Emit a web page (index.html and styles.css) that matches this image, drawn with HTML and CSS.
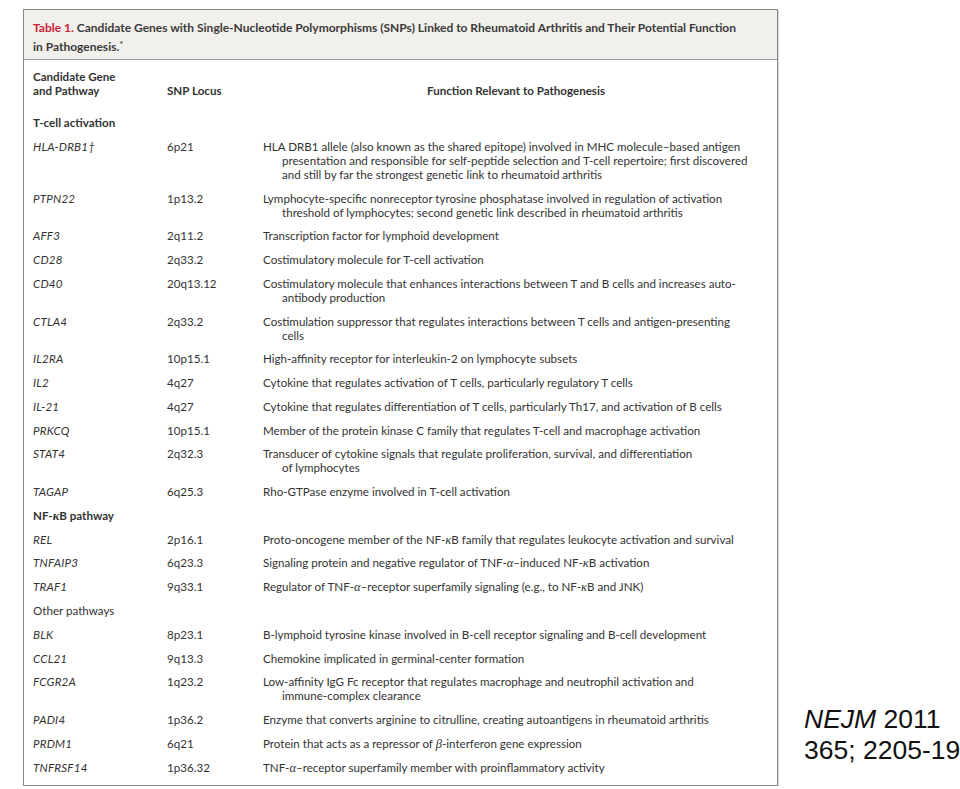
FILE: index.html
```html
<!DOCTYPE html>
<html>
<head>
<meta charset="utf-8">
<link rel="stylesheet" href="styles.css">
</head>
<body>
<div class="page">
  <div class="table-box">
    <div class="title">
      <span class="tnum">Table 1.</span> Candidate Genes with Single-Nucleotide Polymorphisms (SNPs) Linked to Rheumatoid Arthritis and Their Potential Function<br>in Pathogenesis.<sup class="star">*</sup>
    </div>
    <div class="body">
      <div class="row head">
        <div class="c1">Candidate Gene<br>and Pathway</div>
        <div class="c2">SNP Locus</div>
        <div class="c3">Function Relevant to Pathogenesis</div>
      </div>
      <div class="rows">
        <div class="section bold">T-cell activation</div>
        <div class="row"><div class="c1 gene">HLA-DRB1†</div><div class="c2">6p21</div><div class="c3">HLA DRB1 allele (also known as the shared epitope) involved in MHC molecule–based antigen<br>presentation and responsible for self-peptide selection and T-cell repertoire; first discovered<br>and still by far the strongest genetic link to rheumatoid arthritis</div></div>
        <div class="row"><div class="c1 gene">PTPN22</div><div class="c2">1p13.2</div><div class="c3">Lymphocyte-specific nonreceptor tyrosine phosphatase involved in regulation of activation<br>threshold of lymphocytes; second genetic link described in rheumatoid arthritis</div></div>
        <div class="row"><div class="c1 gene">AFF3</div><div class="c2">2q11.2</div><div class="c3">Transcription factor for lymphoid development</div></div>
        <div class="row"><div class="c1 gene">CD28</div><div class="c2">2q33.2</div><div class="c3">Costimulatory molecule for T-cell activation</div></div>
        <div class="row"><div class="c1 gene">CD40</div><div class="c2">20q13.12</div><div class="c3">Costimulatory molecule that enhances interactions between T and B cells and increases auto-<br>antibody production</div></div>
        <div class="row"><div class="c1 gene">CTLA4</div><div class="c2">2q33.2</div><div class="c3">Costimulation suppressor that regulates interactions between T cells and antigen-presenting<br>cells</div></div>
        <div class="row"><div class="c1 gene">IL2RA</div><div class="c2">10p15.1</div><div class="c3">High-affinity receptor for interleukin-2 on lymphocyte subsets</div></div>
        <div class="row"><div class="c1 gene">IL2</div><div class="c2">4q27</div><div class="c3">Cytokine that regulates activation of T cells, particularly regulatory T cells</div></div>
        <div class="row"><div class="c1 gene">IL-21</div><div class="c2">4q27</div><div class="c3">Cytokine that regulates differentiation of T cells, particularly Th17, and activation of B cells</div></div>
        <div class="row"><div class="c1 gene">PRKCQ</div><div class="c2">10p15.1</div><div class="c3">Member of the protein kinase C family that regulates T-cell and macrophage activation</div></div>
        <div class="row"><div class="c1 gene">STAT4</div><div class="c2">2q32.3</div><div class="c3">Transducer of cytokine signals that regulate proliferation, survival, and differentiation<br>of lymphocytes</div></div>
        <div class="row"><div class="c1 gene">TAGAP</div><div class="c2">6q25.3</div><div class="c3">Rho-GTPase enzyme involved in T-cell activation</div></div>
        <div class="section bold">NF-<span class="gk">κ</span>B pathway</div>
        <div class="row"><div class="c1 gene">REL</div><div class="c2">2p16.1</div><div class="c3">Proto-oncogene member of the NF-<span class="gk">κ</span>B family that regulates leukocyte activation and survival</div></div>
        <div class="row"><div class="c1 gene">TNFAIP3</div><div class="c2">6q23.3</div><div class="c3">Signaling protein and negative regulator of TNF-<span class="gk">α</span>–induced NF-<span class="gk">κ</span>B activation</div></div>
        <div class="row"><div class="c1 gene">TRAF1</div><div class="c2">9q33.1</div><div class="c3">Regulator of TNF-<span class="gk">α</span>–receptor superfamily signaling (e.g., to NF-<span class="gk">κ</span>B and JNK)</div></div>
        <div class="section">Other pathways</div>
        <div class="row"><div class="c1 gene">BLK</div><div class="c2">8p23.1</div><div class="c3">B-lymphoid tyrosine kinase involved in B-cell receptor signaling and B-cell development</div></div>
        <div class="row"><div class="c1 gene">CCL21</div><div class="c2">9q13.3</div><div class="c3">Chemokine implicated in germinal-center formation</div></div>
        <div class="row"><div class="c1 gene">FCGR2A</div><div class="c2">1q23.2</div><div class="c3">Low-affinity IgG Fc receptor that regulates macrophage and neutrophil activation and<br>immune-complex clearance</div></div>
        <div class="row"><div class="c1 gene">PADI4</div><div class="c2">1p36.2</div><div class="c3">Enzyme that converts arginine to citrulline, creating autoantigens in rheumatoid arthritis</div></div>
        <div class="row"><div class="c1 gene">PRDM1</div><div class="c2">6q21</div><div class="c3">Protein that acts as a repressor of <span class="gk">β</span>-interferon gene expression</div></div>
        <div class="row"><div class="c1 gene">TNFRSF14</div><div class="c2">1p36.32</div><div class="c3">TNF-<span class="gk">α</span>–receptor superfamily member with proinflammatory activity</div></div>
      </div>
    </div>
  </div>
  <div class="cite"><i>NEJM</i> 2011<br>365; 2205-19</div>
</div>
</body>
</html>
```
FILE: styles.css
```css
html, body {
  margin: 0;
  padding: 0;
  background: #ffffff;
}
.page {
  display: flex;
  align-items: flex-end;
  padding: 9px 0 0 23px;
  gap: 26px;
}
.table-box {
  flex: none;
  width: 753px;
  border: 1px solid #8a8a8a;
  box-shadow: 1px 1px 0 #d6d6d6;
  font-family: Lato, "Open Sans", sans-serif;
  color: #333333;
}
.title {
  background: #f2f0ec;
  border-bottom: 1px solid #9a9a9a;
  padding: 8px 9px 3px 9px;
  font-size: 12px;
  line-height: 19px;
  font-weight: 700;
  color: #3a3a3a;
  white-space: nowrap;
}
.tnum {
  color: #c8233a;
}
.star {
  font-size: 10px;
  font-weight: 400;
  vertical-align: 3px;
  line-height: 0;
}
.body {
  padding: 10px 0 10px 9px;
  font-size: 11.6px;
  line-height: 14px;
}
.row {
  display: grid;
  grid-template-columns: 134px 96px 1fr;
}
.head {
  font-weight: 700;
  align-items: end;
  margin-bottom: 18px;
}
.head .c3 {
  text-align: center;
  padding-right: 8px;
}
.rows {
  display: flex;
  flex-direction: column;
  gap: 9.77px;
}
.section.bold {
  font-weight: 700;
}
.gene {
  font-style: italic;
  letter-spacing: 0.2px;
}
.c3 {
  white-space: nowrap;
}
.rows .c3 {
  padding-left: 19px;
  text-indent: -19px;
}
.gk {
  font-family: "Liberation Serif", serif;
  font-style: italic;
  font-size: 12.5px;
}
.cite {
  flex: none;
  font-family: "Liberation Sans", Arial, sans-serif;
  font-size: 26.5px;
  line-height: 31px;
  color: #111111;
  padding-bottom: 20px;
  white-space: nowrap;
}
```
